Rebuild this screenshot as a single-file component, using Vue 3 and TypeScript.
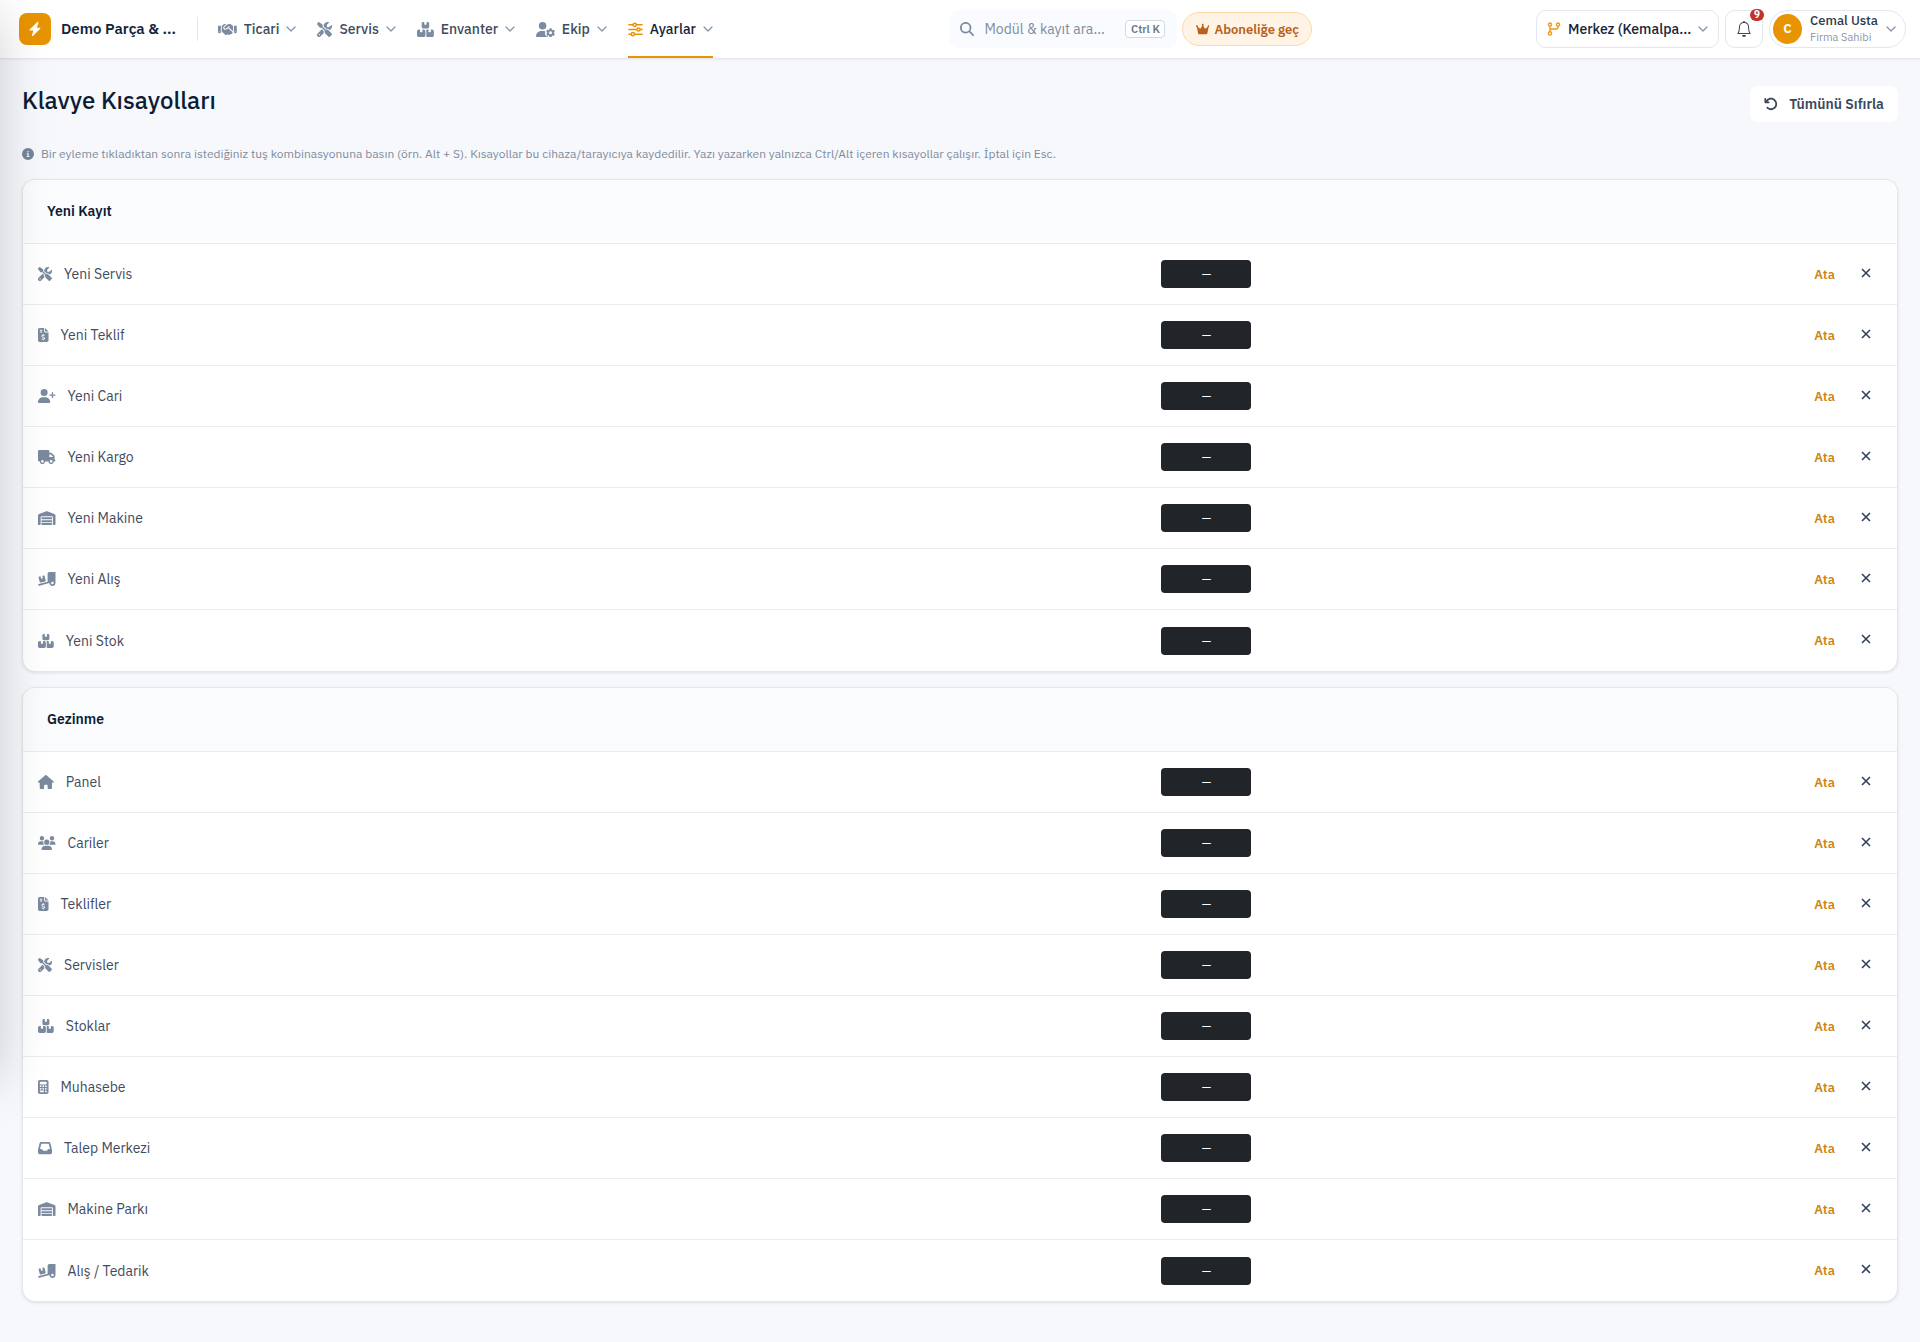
<script setup lang="ts">
import { ref } from 'vue'

interface Glyph {
  width: number
  path: string
}

interface NavItem {
  label: string
  icon: string
  active?: boolean
}

interface Shortcut {
  label: string
  icon: string
}

interface Group {
  title: string
  items: Shortcut[]
}

const glyphs: Record<string, Glyph> = {
  handshake: { width: 640, path: 'M323.4 85.2l-96.8 78.4c-16.1 13-19.2 36.4-7 53.1c12.9 17.8 38 21.3 55.3 7.8l99.3-77.2c7-5.4 17-4.2 22.5 2.8s4.2 17-2.8 22.5l-20.9 16.2L512 316.8V128h-.7l-3.9-2.5L434.8 79c-15.3-9.8-33.2-15-51.4-15c-21.8 0-43 7.5-60 21.2zm22.8 124.4l-51.7 40.2C263 274.3 217.3 268 193.7 235.6c-22.2-30.5-16.6-73.1 12.7-96.8l83.2-67.3c-11.6-4.9-24.1-7.4-36.8-7.4C234 64 215.7 69.6 200 80l-72 48V352h28.2l91.4 83.4c19.6 17.9 49.9 16.5 67.8-3.1c5.5-6.1 9.2-13.2 11.1-20.6l17 15.6c19.5 17.9 49.9 16.6 67.8-2.9c4.5-4.9 7.8-10.6 9.9-16.5c19.4 13 45.8 10.3 62.1-7.5c17.9-19.5 16.6-49.9-2.9-67.8l-134.2-123zM16 128c-8.8 0-16 7.2-16 16V352c0 17.7 14.3 32 32 32H64c17.7 0 32-14.3 32-32V128H16zM48 320a16 16 0 1 1 0 32 16 16 0 1 1 0-32zM544 128V352c0 17.7 14.3 32 32 32h32c17.7 0 32-14.3 32-32V144c0-8.8-7.2-16-16-16H544zm32 208a16 16 0 1 1 32 0 16 16 0 1 1 -32 0z' },
  tools: { width: 512, path: 'M78.6 5C69.1-2.4 55.6-1.5 47 7L7 47c-8.5 8.5-9.4 22-2.1 31.6l80 104c4.5 5.9 11.6 9.4 19 9.4h54.1l109 109c-14.7 29-10 65.4 14.3 89.6l112 112c12.5 12.5 32.8 12.5 45.3 0l64-64c12.5-12.5 12.5-32.8 0-45.3l-112-112c-24.2-24.2-60.6-29-89.6-14.3l-109-109V104c0-7.5-3.5-14.5-9.4-19L78.6 5zM19.9 396.1C7.2 408.8 0 426.1 0 444.1C0 481.6 30.4 512 67.9 512c18 0 35.3-7.2 48-19.9L233.7 374.3c-7.8-20.9-9-43.6-3.6-65.1l-61.7-61.7L19.9 396.1zM512 144c0-10.5-1.1-20.7-3.2-30.5c-2.4-11.2-16.1-14.1-24.2-6l-63.9 63.9c-3 3-7.1 4.7-11.3 4.7H352c-8.8 0-16-7.2-16-16V102.6c0-4.2 1.7-8.3 4.7-11.3l63.9-63.9c8.1-8.1 5.2-21.8-6-24.2C388.7 1.1 378.5 0 368 0C288.5 0 224 64.5 224 144l0 .8 85.3 85.3c36-9.1 75.8 .5 104 28.7L429 274.5c49-23 83-72.8 83-130.5zM56 432a24 24 0 1 1 48 0 24 24 0 1 1 -48 0z' },
  boxes: { width: 576, path: 'M248 0H208c-26.5 0-48 21.5-48 48V160c0 35.3 28.7 64 64 64H352c35.3 0 64-28.7 64-64V48c0-26.5-21.5-48-48-48H328V80c0 8.8-7.2 16-16 16H264c-8.8 0-16-7.2-16-16V0zM64 256c-35.3 0-64 28.7-64 64V448c0 35.3 28.7 64 64 64H224c35.3 0 64-28.7 64-64V320c0-35.3-28.7-64-64-64H184v80c0 8.8-7.2 16-16 16H120c-8.8 0-16-7.2-16-16V256H64zM352 512H512c35.3 0 64-28.7 64-64V320c0-35.3-28.7-64-64-64H472v80c0 8.8-7.2 16-16 16H408c-8.8 0-16-7.2-16-16V256H352c-15 0-28.8 5.1-39.7 13.8c4.9 10.4 7.7 22 7.7 34.2V464c0 12.2-2.8 23.8-7.7 34.2C323.2 506.9 337 512 352 512z' },
  userGear: { width: 640, path: 'M224 0a128 128 0 1 1 0 256A128 128 0 1 1 224 0zM178.3 304h91.4c11.8 0 23.4 1.2 34.5 3.3c-2.1 18.5 7.4 35.6 21.8 44.8c-16.6 10.6-26.7 31.6-20 53.3c4 12.9 9.4 25.5 16.4 37.6s15.2 23.1 24.4 33c15.7 16.9 39.6 18.4 57.2 8.7v.9c0 9.2 2.7 18.5 7.9 26.3H29.7C13.3 512 0 498.7 0 482.3C0 383.8 79.8 304 178.3 304zM452 234.2c0-7 4.5-13.3 11.3-14.8c10.5-2.4 21.5-3.7 32.7-3.7s22.2 1.3 32.7 3.7c6.8 1.5 11.3 7.8 11.3 14.8v30.6c7.9 3.4 15.4 7.7 22.3 12.8l24.9-14.3c6.1-3.5 13.7-2.7 18.5 2.4c7.6 8.1 14.3 17.2 20.1 27.2s10.3 20.4 13.5 31c2.1 6.7-1.1 13.7-7.2 17.2l-25 14.4c.4 4 .7 8.1 .7 12.3s-.2 8.2-.7 12.3l25 14.4c6.1 3.5 9.2 10.5 7.2 17.2c-3.3 10.6-7.8 21-13.5 31s-12.5 19.1-20.1 27.2c-4.8 5.1-12.5 5.9-18.5 2.4l-24.9-14.3c-6.9 5.1-14.3 9.4-22.3 12.8l0 30.6c0 7-4.5 13.3-11.3 14.8c-10.5 2.4-21.5 3.7-32.7 3.7s-22.2-1.3-32.7-3.7c-6.8-1.5-11.3-7.8-11.3-14.8V470.8c-8-3.4-15.6-7.7-22.5-12.9l-24.7 14.3c-6.1 3.5-13.7 2.7-18.5-2.4c-7.6-8.1-14.3-17.2-20.1-27.2s-10.3-20.4-13.5-31c-2.1-6.7 1.1-13.7 7.2-17.2l24.8-14.3c-.4-4.1-.7-8.2-.7-12.4s.2-8.3 .7-12.4L359.8 341c-6.1-3.5-9.2-10.5-7.2-17.2c3.3-10.6 7.7-21 13.5-31s12.5-19.1 20.1-27.2c4.8-5.1 12.4-5.9 18.5-2.4l24.8 14.3c6.9-5.1 14.5-9.4 22.5-12.9V234.2zm92.1 133.5a48.1 48.1 0 1 0 -96.1 0 48.1 48.1 0 1 0 96.1 0z' },
  invoice: { width: 384, path: 'M64 0C28.7 0 0 28.7 0 64V448c0 35.3 28.7 64 64 64H320c35.3 0 64-28.7 64-64V160H256c-17.7 0-32-14.3-32-32V0H64zM256 0V128H384L256 0zM64 80c0-8.8 7.2-16 16-16h64c8.8 0 16 7.2 16 16s-7.2 16-16 16H80c-8.8 0-16-7.2-16-16zm0 64c0-8.8 7.2-16 16-16h64c8.8 0 16 7.2 16 16s-7.2 16-16 16H80c-8.8 0-16-7.2-16-16zm128 72c8.8 0 16 7.2 16 16v17.3c8.5 1.2 16.7 3.1 24.1 5.1c8.5 2.3 13.6 11 11.3 19.6s-11 13.6-19.6 11.3c-11.1-3-22-5.2-32.1-5.3c-8.4-.1-17.4 1.8-23.6 5.5c-5.7 3.4-8.1 7.3-8.1 12.8c0 3.7 1.3 6.5 7.3 10.1c6.9 4.1 16.6 7.1 29.2 10.9l.5 .1c11.3 3.4 25.3 7.6 36.3 14.6c12.1 7.6 22.4 19.7 22.7 38.2c.3 19.3-9.6 33.3-22.9 41.6c-7.7 4.8-16.4 7.6-25.1 9.1V440c0 8.8-7.2 16-16 16s-16-7.2-16-16V422.2c-11.2-2.1-21.7-5.7-30.9-8.9c-2.1-.7-4.2-1.4-6.2-2.1c-8.4-2.8-12.9-11.9-10.1-20.2s11.9-12.9 20.2-10.1c2.5 .8 4.8 1.6 7.1 2.4c13.6 4.6 24.6 8.4 36.3 8.7c9.1 .3 17.9-1.7 23.7-5.3c5.1-3.2 7.9-7.3 7.8-14c-.1-4.6-1.8-7.8-7.7-11.6c-6.8-4.3-16.5-7.4-29-11.2l-1.6-.5c-11-3.3-24.3-7.3-34.8-13.7c-12-7.2-22.6-18.9-22.7-37.3c-.1-19.4 10.8-32.8 23.8-40.5c7.5-4.4 15.8-7.2 24.1-8.7V232c0-8.8 7.2-16 16-16z' },
  userPlus: { width: 640, path: 'M96 128a128 128 0 1 1 256 0A128 128 0 1 1 96 128zM0 482.3C0 383.8 79.8 304 178.3 304h91.4C368.2 304 448 383.8 448 482.3c0 16.4-13.3 29.7-29.7 29.7H29.7C13.3 512 0 498.7 0 482.3zM504 312V248H440c-13.3 0-24-10.7-24-24s10.7-24 24-24h64V136c0-13.3 10.7-24 24-24s24 10.7 24 24v64h64c13.3 0 24 10.7 24 24s-10.7 24-24 24H552v64c0 13.3-10.7 24-24 24s-24-10.7-24-24z' },
  truck: { width: 640, path: 'M48 0C21.5 0 0 21.5 0 48V368c0 26.5 21.5 48 48 48H64c0 53 43 96 96 96s96-43 96-96H384c0 53 43 96 96 96s96-43 96-96h32c17.7 0 32-14.3 32-32s-14.3-32-32-32V288 256 237.3c0-17-6.7-33.3-18.7-45.3L512 114.7c-12-12-28.3-18.7-45.3-18.7H416V48c0-26.5-21.5-48-48-48H48zM416 160h50.7L544 237.3V256H416V160zM112 416a48 48 0 1 1 96 0 48 48 0 1 1 -96 0zm368-48a48 48 0 1 1 0 96 48 48 0 1 1 0-96z' },
  warehouse: { width: 640, path: 'M0 488V171.3c0-26.2 15.9-49.7 40.2-59.4L308.1 4.8c7.6-3.1 16.1-3.1 23.8 0L599.8 111.9c24.3 9.7 40.2 33.3 40.2 59.4V488c0 13.3-10.7 24-24 24H568c-13.3 0-24-10.7-24-24V224c0-17.7-14.3-32-32-32H128c-17.7 0-32 14.3-32 32V488c0 13.3-10.7 24-24 24H24c-13.3 0-24-10.7-24-24zm488 24l-336 0c-13.3 0-24-10.7-24-24V432H512l0 56c0 13.3-10.7 24-24 24zM128 400V336H512v64H128zm0-96V224H512l0 80H128z' },
  ramp: { width: 640, path: 'M640 0V400c0 61.9-50.1 112-112 112c-61 0-110.5-48.7-112-109.3L48.4 502.9c-17.1 4.6-34.6-5.4-39.3-22.5s5.4-34.6 22.5-39.3L352 353.8V64c0-35.3 28.7-64 64-64H640zM576 400a48 48 0 1 0 -96 0 48 48 0 1 0 96 0zM23.1 207.7c-4.6-17.1 5.6-34.6 22.6-39.2l46.4-12.4 20.7 77.3c2.3 8.5 11.1 13.6 19.6 11.3l30.9-8.3c8.5-2.3 13.6-11.1 11.3-19.6l-20.7-77.3 46.4-12.4c17.1-4.6 34.6 5.6 39.2 22.6l41.4 154.5c4.6 17.1-5.6 34.6-22.6 39.2L103.7 384.9c-17.1 4.6-34.6-5.6-39.2-22.6L23.1 207.7z' },
  house: { width: 576, path: 'M575.8 255.5c0 18-15 32.1-32 32.1h-32l.7 160.2c0 2.7-.2 5.4-.5 8.1V472c0 22.1-17.9 40-40 40H456c-1.1 0-2.2 0-3.3-.1c-1.4 .1-2.8 .1-4.2 .1H416 392c-22.1 0-40-17.9-40-40V448 384c0-17.7-14.3-32-32-32H256c-17.7 0-32 14.3-32 32v64 24c0 22.1-17.9 40-40 40H160 128.1c-1.5 0-3-.1-4.5-.2c-1.2 .1-2.4 .2-3.6 .2H104c-22.1 0-40-17.9-40-40V360c0-.9 0-1.9 .1-2.8V287.6H32c-18 0-32-14-32-32.1c0-9 3-17 10-24L266.4 8c7-7 15-8 22-8s15 2 21 7L564.8 231.5c8 7 12 15 11 24z' },
  users: { width: 640, path: 'M144 0a80 80 0 1 1 0 160A80 80 0 1 1 144 0zM512 0a80 80 0 1 1 0 160A80 80 0 1 1 512 0zM0 298.7C0 239.8 47.8 192 106.7 192h42.7c15.9 0 31 3.5 44.6 9.7c-1.3 7.2-1.9 14.7-1.9 22.3c0 38.2 16.8 72.5 43.3 96c-.2 0-.4 0-.7 0H21.3C9.6 320 0 310.4 0 298.7zM405.3 320c-.2 0-.4 0-.7 0c26.6-23.5 43.3-57.8 43.3-96c0-7.6-.7-15-1.9-22.3c13.6-6.3 28.7-9.7 44.6-9.7h42.7C592.2 192 640 239.8 640 298.7c0 11.8-9.6 21.3-21.3 21.3H405.3zM224 224a96 96 0 1 1 192 0 96 96 0 1 1 -192 0zM128 485.3C128 411.7 187.7 352 261.3 352H378.7C452.3 352 512 411.7 512 485.3c0 14.7-11.9 26.7-26.7 26.7H154.7c-14.7 0-26.7-11.9-26.7-26.7z' },
  calculator: { width: 384, path: 'M64 0C28.7 0 0 28.7 0 64V448c0 35.3 28.7 64 64 64H320c35.3 0 64-28.7 64-64V64c0-35.3-28.7-64-64-64H64zM96 64H288c17.7 0 32 14.3 32 32v32c0 17.7-14.3 32-32 32H96c-17.7 0-32-14.3-32-32V96c0-17.7 14.3-32 32-32zm32 160a32 32 0 1 1 -64 0 32 32 0 1 1 64 0zM96 352a32 32 0 1 1 0-64 32 32 0 1 1 0 64zM64 416c0-17.7 14.3-32 32-32h96c17.7 0 32 14.3 32 32s-14.3 32-32 32H96c-17.7 0-32-14.3-32-32zM192 256a32 32 0 1 1 0-64 32 32 0 1 1 0 64zm32 64a32 32 0 1 1 -64 0 32 32 0 1 1 64 0zm64-64a32 32 0 1 1 0-64 32 32 0 1 1 0 64zm32 64a32 32 0 1 1 -64 0 32 32 0 1 1 64 0zM288 448a32 32 0 1 1 0-64 32 32 0 1 1 0 64z' },
  inbox: { width: 512, path: 'M121 32C91.6 32 66 52 58.9 80.5L1.9 308.4C.6 313.5 0 318.7 0 323.9V416c0 35.3 28.7 64 64 64H448c35.3 0 64-28.7 64-64V323.9c0-5.2-.6-10.4-1.9-15.5l-57-227.9C446 52 420.4 32 391 32H121zm0 64H391l48 192H387.8c-12.1 0-23.2 6.8-28.6 17.7l-14.3 28.6c-5.4 10.8-16.5 17.7-28.6 17.7H195.8c-12.1 0-23.2-6.8-28.6-17.7l-14.3-28.6c-5.4-10.8-16.5-17.7-28.6-17.7H73L121 96z' },
}

const box = (name: string): string => `0 0 ${glyphs[name].width} 512`

const nav: NavItem[] = [
  { label: 'Ticari', icon: 'handshake' },
  { label: 'Servis', icon: 'tools' },
  { label: 'Envanter', icon: 'boxes' },
  { label: 'Ekip', icon: 'userGear' },
  { label: 'Ayarlar', icon: 'sliders', active: true },
]

const groups: Group[] = [
  {
    title: 'Yeni Kayıt',
    items: [
      { label: 'Yeni Servis', icon: 'tools' },
      { label: 'Yeni Teklif', icon: 'invoice' },
      { label: 'Yeni Cari', icon: 'userPlus' },
      { label: 'Yeni Kargo', icon: 'truck' },
      { label: 'Yeni Makine', icon: 'warehouse' },
      { label: 'Yeni Alış', icon: 'ramp' },
      { label: 'Yeni Stok', icon: 'boxes' },
    ],
  },
  {
    title: 'Gezinme',
    items: [
      { label: 'Panel', icon: 'house' },
      { label: 'Cariler', icon: 'users' },
      { label: 'Teklifler', icon: 'invoice' },
      { label: 'Servisler', icon: 'tools' },
      { label: 'Stoklar', icon: 'boxes' },
      { label: 'Muhasebe', icon: 'calculator' },
      { label: 'Talep Merkezi', icon: 'inbox' },
      { label: 'Makine Parkı', icon: 'warehouse' },
      { label: 'Alış / Tedarik', icon: 'ramp' },
    ],
  },
]

const query = ref('')
const branch = ref('merkez')
</script>

<template>
  <div class="page">
    <header class="topbar">
      <a class="brand" href="#">
        <span class="logo">
          <svg viewBox="0 0 16 16" aria-hidden="true"><path d="M10.3 1 2.6 8.600a.6.6 0 0 0 .4 1h3.400L4.900 14.200c-.2.7.5 1.100 1 .7l7.400-7.200a.6.6 0 0 0-.4-1H9.900l1.500-4.900C11.600 1 10.800.5 10.300 1Z" /></svg>
        </span>
        <span class="brand-name">Demo Parça &amp; ...</span>
      </a>
      <nav class="nav">
        <a v-for="item in nav" :key="item.label" href="#" class="nav-item" :class="{ active: item.active }">
          <svg v-if="item.icon === 'sliders'" class="nav-icon" viewBox="0 0 16 16" fill="none" stroke="currentColor" stroke-width="1.6" stroke-linecap="round" aria-hidden="true">
            <path d="M1 3h4.500M9 3h6M1 8h8.500M13 8h2M1 13h2.500M7 13h8" />
            <circle class="knob" cx="7.2" cy="3" r="1.7" /><circle class="knob" cx="11.2" cy="8" r="1.7" /><circle class="knob" cx="5.2" cy="13" r="1.7" />
          </svg>
          <svg v-else class="nav-icon" :viewBox="box(item.icon)" aria-hidden="true"><path :d="glyphs[item.icon].path" /></svg>
          <span>{{ item.label }}</span>
          <svg class="chevron" viewBox="0 0 10 10" aria-hidden="true"><path d="m1 3 4 4 4-4" /></svg>
        </a>
      </nav>

      <div class="middle">
        <label class="search">
          <svg viewBox="0 0 512 512" aria-hidden="true"><path d="M416 208c0 45.9-14.9 88.3-40 122.7L502.6 457.4c12.5 12.5 12.5 32.8 0 45.3s-32.8 12.5-45.3 0L330.7 376c-34.4 25.2-76.8 40-122.7 40C93.1 416 0 322.9 0 208S93.1 0 208 0S416 93.1 416 208zM208 352a144 144 0 1 0 0-288 144 144 0 1 0 0 288z" /></svg>
          <input v-model="query" type="text" placeholder="Modül &amp; kayıt ara..." aria-label="Modül ve kayıt ara">
          <kbd>Ctrl K</kbd>
        </label>
        <button type="button" class="upgrade">
          <svg viewBox="0 0 576 512" aria-hidden="true"><path d="M309 106c11.4-7 19-19.7 19-34c0-22.1-17.9-40-40-40s-40 17.9-40 40c0 14.4 7.6 27 19 34L209.7 220.6c-9.1 18.2-32.7 23.4-48.6 10.7L72 160c5-6.7 8-15 8-24c0-22.1-17.9-40-40-40S0 113.9 0 136s17.9 40 40 40c.2 0 .5 0 .7 0L86.4 427.4c5.5 30.4 32 52.6 63 52.6H426.6c30.9 0 57.4-22.1 63-52.6L535.3 176c.2 0 .5 0 .7 0c22.1 0 40-17.9 40-40s-17.9-40-40-40s-40 17.9-40 40c0 9 3 17.3 8 24l-89.1 71.3c-15.9 12.7-39.5 7.5-48.6-10.7L309 106z" /></svg>
          Aboneliğe geç
        </button>
      </div>

      <div class="account">
        <label class="branch">
          <svg class="branch-icon" viewBox="0 0 14 14" aria-hidden="true">
            <circle cx="3" cy="2.6" r="1.6" /><circle cx="3" cy="11.4" r="1.6" /><circle cx="11" cy="2.6" r="1.6" />
            <path d="M3 4.200v5.600M11 4.200V5a2 2 0 0 1-2 2H5a2 2 0 0 0-2 2" />
          </svg>
          <select v-model="branch" aria-label="Şube">
            <option value="merkez">Merkez (Kemalpa...</option>
          </select>
          <svg class="chevron" viewBox="0 0 10 10" aria-hidden="true"><path d="m1 3 4 4 4-4" /></svg>
        </label>
        <button type="button" class="bell" aria-label="Bildirimler">
          <svg viewBox="0 0 16 16" aria-hidden="true"><path d="M8 16a2 2 0 0 0 2-2H6a2 2 0 0 0 2 2M8 1.918l-.797.161A4 4 0 0 0 4 6c0 .628-.134 2.197-.459 3.742-.16.767-.376 1.566-.663 2.258h10.244c-.287-.692-.502-1.49-.663-2.258C12.134 8.197 12 6.628 12 6a4 4 0 0 0-3.203-3.92zM14.22 12c.223.447.481.801.78 1H1c.299-.199.557-.553.78-1C2.68 10.2 3 6.88 3 6c0-2.42 1.72-4.44 4.005-4.901a1 1 0 1 1 1.99 0A5 5 0 0 1 13 6c0 .88.32 4.2 1.22 6" /></svg>
          <span class="count">9</span>
        </button>
        <button type="button" class="user">
          <span class="avatar">C</span>
          <span class="who"><strong>Cemal Usta</strong><small>Firma Sahibi</small></span>
          <svg class="chevron" viewBox="0 0 10 10" aria-hidden="true"><path d="m1 3 4 4 4-4" /></svg>
        </button>
      </div>
    </header>

    <main class="content">
      <div class="heading">
        <h1>Klavye Kısayolları</h1>
        <button type="button" class="reset">
          <svg viewBox="0 0 512 512" aria-hidden="true"><path d="M125.7 160H176c17.7 0 32 14.3 32 32s-14.3 32-32 32H48c-17.7 0-32-14.3-32-32V64c0-17.7 14.3-32 32-32s32 14.3 32 32v51.2L97.6 97.6c87.5-87.5 229.3-87.5 316.8 0s87.5 229.3 0 316.8s-229.3 87.5-316.8 0c-12.5-12.5-12.5-32.8 0-45.3s32.8-12.5 45.3 0c62.5 62.5 163.8 62.5 226.3 0s62.5-163.8 0-226.3s-163.8-62.5-226.3 0L125.7 160z" /></svg>
          Tümünü Sıfırla
        </button>
      </div>

      <p class="hint">
        <svg viewBox="0 0 512 512" aria-hidden="true"><path d="M256 512A256 256 0 1 0 256 0a256 256 0 1 0 0 512zM216 336h24V272H216c-13.3 0-24-10.7-24-24s10.7-24 24-24h48c13.3 0 24 10.7 24 24v88h8c13.3 0 24 10.7 24 24s-10.7 24-24 24H216c-13.3 0-24-10.7-24-24s10.7-24 24-24zm40-208a32 32 0 1 1 0 64 32 32 0 1 1 0-64z" /></svg>
        <span>Bir eyleme tıkladıktan sonra istediğiniz tuş kombinasyonuna basın (örn. Alt + S). Kısayollar bu cihaza/tarayıcıya kaydedilir. Yazı yazarken yalnızca Ctrl/Alt içeren kısayollar çalışır. İptal için Esc.</span>
      </p>

      <section v-for="group in groups" :key="group.title" class="card">
        <h2>{{ group.title }}</h2>
        <table>
          <colgroup>
            <col class="col-action">
            <col class="col-keys">
            <col>
          </colgroup>
          <tbody>
            <tr v-for="item in group.items" :key="item.label">
              <td>
                <div class="action">
                  <svg :viewBox="box(item.icon)" aria-hidden="true"><path :d="glyphs[item.icon].path" /></svg>
                  <span>{{ item.label }}</span>
                </div>
              </td>
              <td><kbd class="keys">—</kbd></td>
              <td>
                <div class="controls">
                  <button type="button" class="assign">Ata</button>
                  <button type="button" class="clear" :aria-label="`${item.label} kısayolunu kaldır`">
                    <svg viewBox="0 0 10 10" aria-hidden="true"><path d="m1 1 8 8M9 1 1 9" /></svg>
                  </button>
                </div>
              </td>
            </tr>
          </tbody>
        </table>
      </section>
    </main>

    <aside class="drawer" aria-hidden="true"></aside>
  </div>
</template>

<style>
body {
  margin: 0;
  background: #f6f8fc;
}
</style>

<style scoped>
.page {
  position: relative;
  min-height: 100vh;
  overflow: hidden;
  box-sizing: border-box;
  color: #3f4b60;
  font-family: "IBM Plex Sans", Roboto, "Liberation Sans", sans-serif;
  font-size: 14px;
  line-height: 20px;
}

.page *,
.page *::before {
  box-sizing: border-box;
}

button,
input,
select,
kbd {
  margin: 0;
  font-family: inherit;
}

button {
  padding: 0;
  border: 0;
  background: none;
  cursor: pointer;
}

a {
  color: inherit;
  text-decoration: none;
}

svg {
  display: block;
  flex: none;
  fill: currentColor;
}

.topbar {
  display: flex;
  align-items: center;
  height: 59px;
  padding: 0 14px 0 19px;
  border-bottom: 1px solid #e4e7ee;
  background: #fff;
  box-shadow: 0 1px 2px rgba(16, 24, 40, 0.05);
}

.brand {
  display: flex;
  align-items: center;
  gap: 10px;
  width: 179px;
  height: 24px;
  border-right: 1px solid #e4e7ee;
}

.logo {
  display: grid;
  place-items: center;
  width: 32px;
  height: 32px;
  border-radius: 8px;
  background: #e89300;
  color: #fff;
}

.logo svg {
  width: 16px;
}

.brand-name {
  color: #14233c;
  font-size: 15px;
  font-weight: 600;
  white-space: nowrap;
}

.nav {
  display: flex;
  gap: 21px;
  height: 58px;
  margin-left: 20px;
}

.nav-item {
  display: flex;
  align-items: center;
  gap: 7px;
  padding-top: 2px;
  border-bottom: 2px solid transparent;
  font-size: 14px;
  font-weight: 500;
}

.nav-icon {
  height: 15px;
  color: #7b8ba0;
}

.knob {
  fill: #fff;
}

.nav-item.active {
  border-color: #e89300;
  color: #14233c;
}

.nav-item.active .nav-icon {
  color: #e89300;
}

.chevron {
  width: 10px;
  fill: none;
  stroke: #8492a6;
  stroke-width: 1.2;
  stroke-linecap: round;
  stroke-linejoin: round;
}

.middle {
  display: flex;
  align-items: center;
  gap: 5px;
  margin: 0 auto;
  padding-left: 13px;
}

.search {
  display: flex;
  align-items: center;
  gap: 10px;
  width: 228px;
  height: 38px;
  padding: 0 12px 0 11px;
  border-radius: 10px;
  background: #fafbfe;
}

.search svg {
  width: 14px;
  color: #7b8ba0;
}

.search input {
  flex: 1;
  min-width: 0;
  padding: 0;
  border: 0;
  outline: 0;
  background: none;
  color: #14233c;
  font-size: 14px;
}

.search input::placeholder {
  color: #7b8ba0;
  opacity: 1;
}

.search kbd {
  width: 40px;
  height: 18px;
  border: 1px solid #d4d9e2;
  border-radius: 4px;
  background: #fff;
  color: #6b7a90;
  font-size: 11px;
  font-weight: 600;
  line-height: 16px;
  text-align: center;
}

.upgrade {
  display: flex;
  align-items: center;
  justify-content: center;
  gap: 5px;
  width: 130px;
  height: 34px;
  border: 1px solid #ffd9a3;
  border-radius: 17px;
  background: #fff3e5;
  color: #b9601a;
  font-size: 13px;
  font-weight: 600;
}

.upgrade svg {
  height: 12px;
}

.account {
  display: flex;
  align-items: center;
  gap: 6px;
}

.branch {
  display: flex;
  align-items: center;
  width: 183px;
  height: 38px;
  padding: 0 10px;
  border: 1px solid #e4e7ef;
  border-radius: 10px;
}

.branch-icon {
  width: 14px;
  fill: none;
  stroke: #f09a1a;
  stroke-width: 1.4;
}

.branch select {
  flex: 1;
  min-width: 0;
  padding: 0 0 0 7px;
  border: 0;
  appearance: none;
  background: none;
  color: #14233c;
  font-size: 14px;
  font-weight: 500;
}

.bell {
  position: relative;
  display: grid;
  place-items: center;
  width: 38px;
  height: 38px;
  border: 1px solid #e4e7ef;
  border-radius: 10px;
  color: #3a475c;
}

.bell svg {
  width: 16px;
}

.count {
  position: absolute;
  top: -2px;
  right: -2px;
  min-width: 14px;
  height: 12px;
  border-radius: 6px;
  background: #c0342b;
  color: #fff;
  font-size: 10px;
  font-weight: 700;
  line-height: 12px;
  text-align: center;
}

.user {
  display: flex;
  align-items: center;
  gap: 8px;
  width: 137px;
  height: 38px;
  padding: 0 9px 0 3px;
  border: 1px solid #e4e7ef;
  border-radius: 19px;
}

.avatar {
  width: 30px;
  height: 30px;
  border-radius: 50%;
  background: #e89300;
  color: #fff;
  font-size: 13px;
  font-weight: 700;
  line-height: 30px;
}

.who {
  display: flex;
  flex: 1;
  flex-direction: column;
  text-align: left;
}

.who strong {
  color: #2b3850;
  font-size: 13px;
  font-weight: 500;
  line-height: 16px;
  white-space: nowrap;
}

.who small {
  color: #8b98ab;
  font-size: 11px;
  line-height: 16px;
}

.content {
  padding: 27px 22px 40px;
}

.heading {
  display: flex;
  align-items: flex-start;
  justify-content: space-between;
}

h1 {
  margin: 0;
  color: #0d1c36;
  font-size: 24px;
  font-weight: 500;
  line-height: 29px;
}

.reset {
  display: flex;
  align-items: center;
  justify-content: center;
  gap: 11px;
  width: 148px;
  height: 36px;
  border-radius: 8px;
  background: #fff;
  color: #3a475c;
  font-size: 14px;
  font-weight: 600;
}

.reset svg {
  width: 14px;
}

.hint {
  display: flex;
  align-items: center;
  gap: 7px;
  margin: 22px 0 15px;
  color: #7f8b9d;
  font-size: 12px;
  line-height: 20px;
}

.hint svg {
  width: 12px;
  color: #76859a;
}

.card {
  margin-bottom: 15px;
  overflow: hidden;
  border: 1px solid #e3e6ed;
  border-radius: 13px;
  background: #fff;
  box-shadow: 0 1px 3px rgba(16, 24, 40, 0.1);
}

h2 {
  margin: 0;
  padding: 21px 24px;
  border-bottom: 1px solid #e9ecf1;
  background: #fbfcfe;
  color: #0d1c36;
  font-size: 14px;
  font-weight: 600;
  line-height: 21px;
}

table {
  width: 100%;
  border-collapse: separate;
  border-spacing: 0;
  table-layout: fixed;
}

.col-action {
  width: 60%;
}

.col-keys {
  width: 20%;
}

td {
  height: 61px;
  padding: 0 14px;
}

td:first-child {
  padding-left: 15px;
}

td:last-child {
  padding-right: 20px;
}

tr:not(:last-child) td {
  border-bottom: 1px solid #e9ecf1;
}

.action {
  display: flex;
  align-items: center;
  gap: 12px;
}

.action svg {
  height: 14px;
  color: #7b8a9f;
}

.keys {
  display: block;
  width: 90px;
  height: 28px;
  border-radius: 4px;
  background: #212529;
  color: #fff;
  font-size: 12px;
  line-height: 28px;
  text-align: center;
}

.controls {
  display: flex;
  align-items: center;
  justify-content: flex-end;
  gap: 14px;
}

.assign {
  padding: 4px 6px;
  color: #cf8414;
  font-size: 13px;
  font-weight: 600;
}

.clear {
  padding: 5px 6px 8px;
  color: #33425c;
}

.clear svg {
  width: 10px;
  fill: none;
  stroke: currentColor;
  stroke-width: 1.6;
}

/* closed side drawer: only its shadow reaches the page */
.drawer {
  position: absolute;
  top: 0;
  left: -320px;
  width: 320px;
  height: 1064px;
  box-shadow: 0 16px 48px rgba(0, 0, 0, 0.18);
  pointer-events: none;
}
</style>
